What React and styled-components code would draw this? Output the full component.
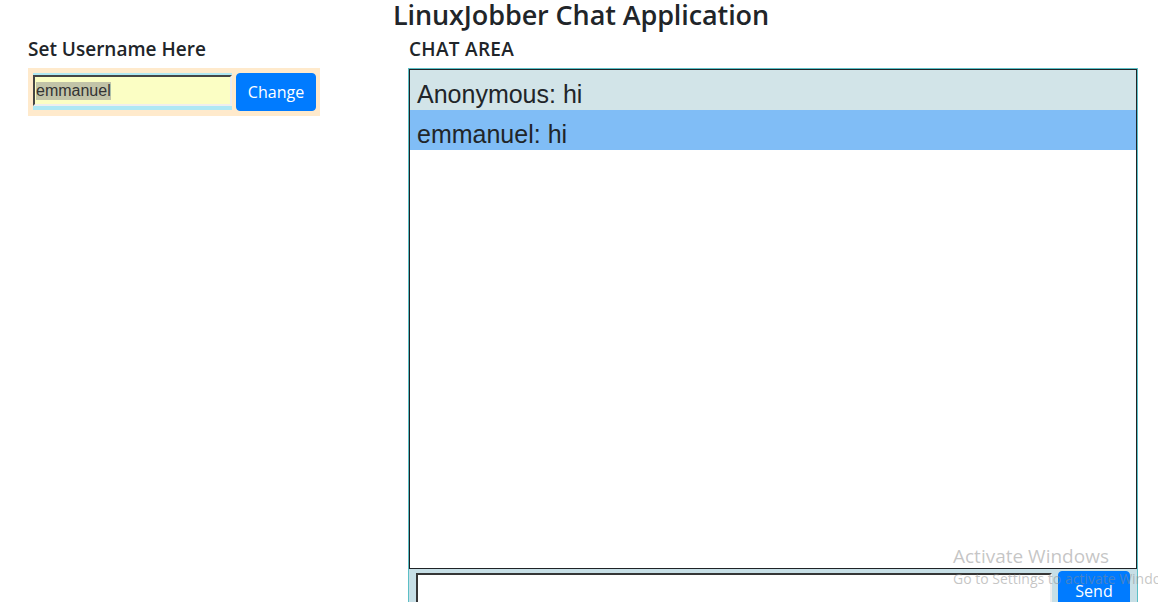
import React, { useEffect, useRef } from "react";
import styled, { createGlobalStyle } from "styled-components";

const c_text = "#212529";
const c_blue = "#007bff";

const GlobalStyle = createGlobalStyle`
  html, body {
    margin: 0;
    padding: 0;
    background: #ffffff;
    color: ${c_text};
    font-family: "Open Sans", "Noto Sans", sans-serif;
    overflow: hidden;
  }
`;

const Page = styled.div`
  position: relative;
  width: 1158px;
  height: 602px;
  overflow: hidden;
`;

const Title = styled.h3`
  margin: 0 0 6px;
  font-size: 27px;
  font-weight: 600;
  line-height: 30px;
  text-align: center;
  letter-spacing: -0.1px;
  padding-left: 4px;
`;

const Row = styled.div`
  display: grid;
  grid-template-columns: 380px 730px;
  padding-left: 28px;
`;

const Column = styled.div`
  display: flex;
  flex-direction: column;
`;

const Label = styled.h5`
  margin: 0 0 7px;
  padding-top: 1px;
  font-size: 19px;
  font-weight: 600;
  line-height: 24px;
  padding-left: ${(props) => props.indent || 0}px;
  letter-spacing: ${(props) => props.spacing || 0}px;
`;

const UserBox = styled.form`
  display: flex;
  align-items: flex-start;
  gap: 4px;
  width: 292px;
  box-sizing: border-box;
  padding: 5px;
  background: #ffeacc;
`;

const InputWrap = styled.div`
  width: 199px;
  padding: 2px 0 4px;
  background: #aee8f4;
`;

const NameInput = styled.input`
  display: block;
  width: 199px;
  height: 31px;
  box-sizing: border-box;
  margin: 0;
  padding: 1px 1px;
  border: 2px inset #eeeeee;
  border-top-color: #999999;
  border-left-color: #999999;
  background: #fbfec4;
  color: #333333;
  font-family: "Liberation Sans", Arial, sans-serif;
  font-size: 16px;
  outline: none;

  &::selection {
    background: #c2c4a8;
    color: #333333;
  }
`;

const Button = styled.button`
  height: ${(props) => props.h || 38}px;
  width: ${(props) => props.w || 80}px;
  padding: 0;
  border: 1px solid ${c_blue};
  border-radius: 4px;
  background: ${c_blue};
  color: #ffffff;
  font-family: "Open Sans", "Noto Sans", sans-serif;
  font-size: 16px;
  line-height: 1.5;
  cursor: pointer;
  flex-shrink: 0;
`;

const ChatFrame = styled.div`
  display: flex;
  flex-direction: column;
  border: 1px solid #5cbfc6;
  border-bottom: none;
`;

const Messages = styled.div`
  flex-shrink: 0;
  height: 500px;
  box-sizing: border-box;
  border: 1px solid #1f2326;
  background: #ffffff;
`;

const Message = styled.div`
  height: 40px;
  box-sizing: border-box;
  padding: 9px 0 0 7px;
  display: flex;
  align-items: center;
  background: ${(props) => props.bg};
  font-family: "Liberation Sans", Arial, sans-serif;
  font-size: 25px;
  color: ${c_text};
`;

const SendForm = styled.div`
  display: flex;
  align-items: flex-start;
  gap: 6px;
  height: 60px;
  padding: 2px 7px 0;
  background: #c7dfe6;
`;

const TextArea = styled.textarea`
  flex: 1;
  height: 44px;
  margin: 2px 0 0;
  box-sizing: border-box;
  border: 2px inset #eeeeee;
  border-top-color: #8a8a8a;
  border-left-color: #8a8a8a;
  resize: none;
  outline: none;
  background: #ffffff;
`;

const Watermark = styled.div`
  position: absolute;
  left: 953px;
  top: 543px;
  color: rgba(140, 140, 140, 0.5);
  font-family: "Open Sans", "Noto Sans", sans-serif;
  white-space: nowrap;
  pointer-events: none;
`;

const WatermarkTitle = styled.div`
  font-size: 19px;
  line-height: 26px;
`;

const WatermarkText = styled.div`
  font-size: 14px;
  line-height: 20px;
`;

const messages = [
  { user: "Anonymous", text: "hi", bg: "#d2e4e8" },
  { user: "emmanuel", text: "hi", bg: "#80bdf6" },
];

const App = () => {
  const inputRef = useRef(null);

  useEffect(() => {
    const el = inputRef.current;
    if (el) {
      el.focus();
      el.setSelectionRange(0, el.value.length);
    }
  }, []);

  return (
    <Page>
      <GlobalStyle />
      <Title>LinuxJobber Chat Application</Title>
      <Row>
        <Column>
          <Label>Set Username Here</Label>
          <UserBox onSubmit={(e) => e.preventDefault()}>
            <InputWrap>
              <NameInput ref={inputRef} defaultValue="emmanuel" />
            </InputWrap>
            <Button type="submit">Change</Button>
          </UserBox>
        </Column>
        <Column>
          <Label indent={1} spacing={0.3}>
            CHAT AREA
          </Label>
          <ChatFrame>
            <Messages>
              {messages.map((m, i) => (
                <Message key={i} bg={m.bg}>
                  {m.user}: {m.text}
                </Message>
              ))}
            </Messages>
            <SendForm>
              <TextArea />
              <Button w={72} h={40}>
                Send
              </Button>
            </SendForm>
          </ChatFrame>
        </Column>
      </Row>
      <Watermark>
        <WatermarkTitle>Activate Windows</WatermarkTitle>
        <WatermarkText>Go to Settings to activate Windows.</WatermarkText>
      </Watermark>
    </Page>
  );
};

export default App;
